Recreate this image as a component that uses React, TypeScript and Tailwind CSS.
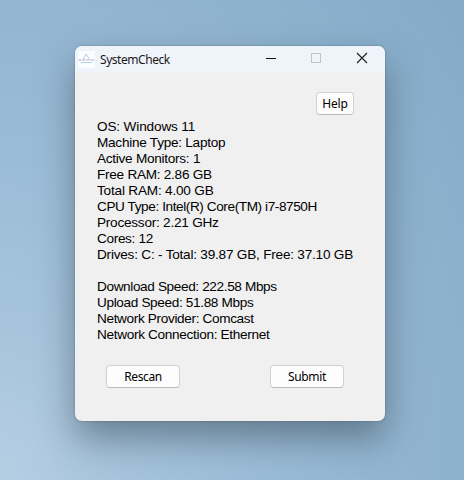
import type { ReactNode } from "react";

type Line = { text: string; tracking: string };

const systemLines: Line[] = [
  { text: "OS: Windows 11", tracking: "tracking-[-0.15px]" },
  { text: "Machine Type: Laptop", tracking: "tracking-[-0.26px]" },
  { text: "Active Monitors: 1", tracking: "tracking-[-0.27px]" },
  { text: "Free RAM: 2.86 GB", tracking: "tracking-[-0.27px]" },
  { text: "Total RAM: 4.00 GB", tracking: "tracking-[-0.2px]" },
  { text: "CPU Type: Intel(R) Core(TM) i7-8750H", tracking: "tracking-[-0.41px]" },
  { text: "Processor: 2.21 GHz", tracking: "tracking-[-0.24px]" },
  { text: "Cores: 12", tracking: "tracking-[-0.34px]" },
  { text: "Drives: C: - Total: 39.87 GB, Free: 37.10 GB", tracking: "tracking-[-0.22px]" },
];

const networkLines: Line[] = [
  { text: "Download Speed: 222.58 Mbps", tracking: "tracking-[-0.37px]" },
  { text: "Upload Speed: 51.88 Mbps", tracking: "tracking-[-0.35px]" },
  { text: "Network Provider: Comcast", tracking: "tracking-[-0.35px]" },
  { text: "Network Connection: Ethernet", tracking: "tracking-[-0.32px]" },
];

function InfoBlock({ lines }: { lines: Line[] }) {
  return (
    <div>
      {lines.map((line) => (
        <div key={line.text} className="h-4 whitespace-nowrap">
          <span className={line.tracking}>{line.text}</span>
        </div>
      ))}
    </div>
  );
}

function Button({ className, children }: { className: string; children: ReactNode }) {
  return (
    <button
      className={`flex h-[23px] items-center justify-center rounded-[4px] border border-[#d0d0d0] border-b-[#bcbcbc] bg-[#fdfdfd] font-['Noto_Sans',sans-serif] text-[12px] leading-4 text-black ${className}`}
    >
      {children}
    </button>
  );
}

function TitleBar() {
  return (
    <header className="flex h-[26px] items-center bg-[#eff4fb] pl-[3px]">
      <svg width="17" height="17" viewBox="0 0 17 17" fill="none" aria-hidden="true">
        <rect width="17" height="17" fill="#fcfdff" />
        <path d="M5 8.5 8.2 3 11.5 8.5" stroke="#a3bfe6" strokeWidth=".8" />
        <path d="M.5 9h3M4.5 9h3M8.5 9h3M12.5 9h4" stroke="#b0abc9" strokeWidth="1.1" />
        <path d="M3 11.5h11" stroke="#a5cfe6" strokeWidth=".9" />
      </svg>
      <span className="ml-[5px] mt-px font-['Noto_Sans',sans-serif] text-[12px] leading-4 tracking-[-0.45px] text-[#191919]">
        SystemCheck
      </span>
      <svg className="-mt-[2px] ml-auto mr-[17px]" width="104" height="12" viewBox="0 0 104 12" fill="none" aria-hidden="true">
        <path d="M2 6.5h10" stroke="#111" />
        <rect x="47.5" y="1.5" width="9" height="9" stroke="#bfc3c9" />
        <path d="m93 1 10 10m0-10L93 11" stroke="#1b1b1b" strokeWidth="1.1" />
      </svg>
    </header>
  );
}

export default function App() {
  return (
    <main className="h-[480px] w-[464px] overflow-hidden bg-[radial-gradient(ellipse_620px_760px_at_0%_100%,#b5cee4_0%,#a5c3dc_22%,#9bbcd7_42%,#94b6d2_60%,#8bb1cd_78%,#82a9c7_100%)] pl-[75px] pt-[46px]">
      <section className="flex h-[375px] w-[310px] flex-col overflow-hidden rounded-[7px] bg-[#f0f0f0] shadow-[0_0_2px_rgba(45,65,80,0.5),0_18px_36px_rgba(55,72,85,0.55)]">
        <TitleBar />
        <div className="flex justify-end pr-[31px] pt-5">
          <Button className="w-[38px] tracking-[-0.15px]">Help</Button>
        </div>
        <div className="ml-[22px] mt-1 flex flex-col gap-4 font-['Liberation_Sans',Arial,sans-serif] text-[13.6px] leading-4 text-black">
          <InfoBlock lines={systemLines} />
          <InfoBlock lines={networkLines} />
        </div>
        <div className="mt-[22px] flex justify-between pl-[31px] pr-[41px]">
          <Button className="w-[74px] tracking-[-0.4px]">Rescan</Button>
          <Button className="w-[74px] tracking-[-0.3px]">Submit</Button>
        </div>
      </section>
    </main>
  );
}
